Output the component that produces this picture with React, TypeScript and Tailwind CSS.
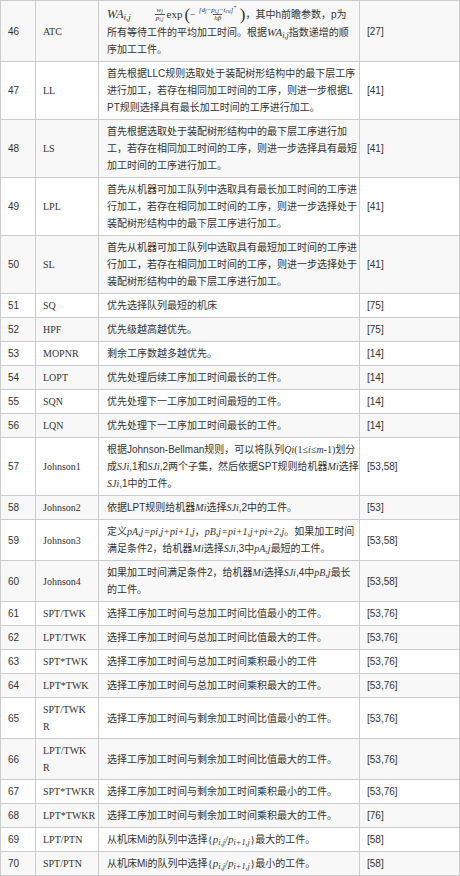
import React from 'react';

type Row = {
  no: number;
  name: React.ReactNode;
  lines: React.ReactNode[];
  refs: string;
  firstTall?: boolean;
};

// italic math, serif like the source page
const M: React.FC<{ children: React.ReactNode }> = ({ children }) => (
  <i className="font-['Liberation_Serif',serif] text-[10px]">{children}</i>
);

const Frac: React.FC<{ top: React.ReactNode; bottom: React.ReactNode }> = ({ top, bottom }) => (
  <span className="mx-[2px] inline-flex flex-col items-center align-middle font-['Liberation_Serif',serif] text-[7px] leading-[7px] italic">
    <span className="px-[1px]">{top}</span>
    <span className="border-t border-[#555] px-[1px]">{bottom}</span>
  </span>
);

const Pij: React.FC<{ sub: string }> = ({ sub }) => (
  <i className="font-['Liberation_Serif',serif] text-[11px]">
    p<sub>{sub}</sub>
  </i>
);

const rows: Row[] = [
  {
    no: 46,
    name: 'ATC',
    firstTall: true,
    lines: [
      <>
        <i className="font-['Liberation_Serif',serif] text-[12px]">
          WA<sub>i,j</sub>
        </i>
        <span className="ml-[22px]" />
        <Frac top={<>w<sub>j</sub></>} bottom={<>p<sub>i,j</sub></>} />
        <span className="font-['Liberation_Serif',serif] text-[11px]">exp</span>
        <span className="ml-[2px] font-['Liberation_Serif',serif] text-[17px] leading-[17px] font-light">(</span>
        <span className="font-['Liberation_Serif',serif] text-[10px]">−</span>
        <Frac
          top={<>[d<sub>j</sub>−p<sub>i,j</sub>−t<sub>cu</sub>]<sup>+</sup></>}
          bottom={<>hp̄</>}
        />
        <span className="font-['Liberation_Serif',serif] text-[17px] leading-[17px] font-light">)</span>
        ，其中h前瞻参数，p为
      </>,
      <>
        所有等待工件的平均加工时间。根据
        <i className="font-['Liberation_Serif',serif] text-[11px]">
          WA<sub>i,j</sub>
        </i>
        指数递增的顺
      </>,
      '序加工工件。',
    ],
    refs: '[27]',
  },
  {
    no: 47,
    name: 'LL',
    lines: [
      '首先根据LLC规则选取处于装配树形结构中的最下层工序',
      '进行加工，若存在相同加工时间的工序，则进一步根据L',
      'PT规则选择具有最长加工时间的工序进行加工。',
    ],
    refs: '[41]',
  },
  {
    no: 48,
    name: 'LS',
    lines: [
      '首先根据选取处于装配树形结构中的最下层工序进行加',
      '工，若存在相同加工时间的工序，则进一步选择具有最短',
      '加工时间的工序进行加工。',
    ],
    refs: '[41]',
  },
  {
    no: 49,
    name: 'LPL',
    lines: [
      '首先从机器可加工队列中选取具有最长加工时间的工序进',
      '行加工，若存在相同加工时间的工序，则进一步选择处于',
      '装配树形结构中的最下层工序进行加工。',
    ],
    refs: '[41]',
  },
  {
    no: 50,
    name: 'SL',
    lines: [
      '首先从机器可加工队列中选取具有最短加工时间的工序进',
      '行加工，若存在相同加工时间的工序，则进一步选择处于',
      '装配树形结构中的最下层工序进行加工。',
    ],
    refs: '[41]',
  },
  { no: 51, name: 'SQ', lines: ['优先选择队列最短的机床'], refs: '[75]' },
  { no: 52, name: 'HPF', lines: ['优先级越高越优先。'], refs: '[75]' },
  { no: 53, name: 'MOPNR', lines: ['剩余工序数越多越优先。'], refs: '[14]' },
  { no: 54, name: 'LOPT', lines: ['优先处理后续工序加工时间最长的工件。'], refs: '[14]' },
  { no: 55, name: 'SQN', lines: ['优先处理下一工序加工时间最短的工件。'], refs: '[14]' },
  { no: 56, name: 'LQN', lines: ['优先处理下一工序加工时间最长的工件。'], refs: '[14]' },
  {
    no: 57,
    name: 'Johnson1',
    lines: [
      <>
        根据Johnson-Bellman规则，可以将队列<M>Qi</M>
        <span className="font-['Liberation_Serif',serif] text-[10px]">
          (1≤<i>i</i>≤<i>m</i>-1)
        </span>
        划分
      </>,
      <>
        成<M>SJi</M>,1和<M>SJi</M>,2两个子集，然后依据SPT规则给机器<M>Mi</M>选择
      </>,
      <>
        <M>SJi</M>,1中的工件。
      </>,
    ],
    refs: '[53,58]',
  },
  {
    no: 58,
    name: 'Johnson2',
    lines: [
      <>
        依据LPT规则给机器<M>Mi</M>选择<M>SJi</M>,2中的工件。
      </>,
    ],
    refs: '[53]',
  },
  {
    no: 59,
    name: 'Johnson3',
    lines: [
      <>
        定义<M>pA,j=pi,j+pi+1,j</M>，<M>pB,j=pi+1,j+pi+2,j</M>。如果加工时间
      </>,
      <>
        满足条件2，给机器<M>Mi</M>选择<M>SJi</M>,3中<M>pA,j</M>最短的工件。
      </>,
    ],
    refs: '[53,58]',
  },
  {
    no: 60,
    name: 'Johnson4',
    lines: [
      <>
        如果加工时间满足条件2，给机器<M>Mi</M>选择<M>SJi</M>,4中<M>pB,j</M>最长
      </>,
      '的工件。',
    ],
    refs: '[53,58]',
  },
  { no: 61, name: 'SPT/TWK', lines: ['选择工序加工时间与总加工时间比值最小的工件。'], refs: '[53,76]' },
  { no: 62, name: 'LPT/TWK', lines: ['选择工序加工时间与总加工时间比值最大的工件。'], refs: '[53,76]' },
  { no: 63, name: 'SPT*TWK', lines: ['选择工序加工时间与总加工时间乘积最小的工件'], refs: '[53,76]' },
  { no: 64, name: 'LPT*TWK', lines: ['选择工序加工时间与总加工时间乘积最大的工件。'], refs: '[53,76]' },
  {
    no: 65,
    name: (
      <>
        <div>SPT/TWK</div>
        <div>R</div>
      </>
    ),
    lines: ['选择工序加工时间与剩余加工时间比值最小的工件。'],
    refs: '[53,76]',
  },
  {
    no: 66,
    name: (
      <>
        <div>LPT/TWK</div>
        <div>R</div>
      </>
    ),
    lines: ['选择工序加工时间与剩余加工时间比值最大的工件。'],
    refs: '[53,76]',
  },
  { no: 67, name: 'SPT*TWKR', lines: ['选择工序加工时间与剩余加工时间乘积最小的工件。'], refs: '[53,76]' },
  { no: 68, name: 'LPT*TWKR', lines: ['选择工序加工时间与剩余加工时间乘积最大的工件。'], refs: '[76]' },
  {
    no: 69,
    name: 'LPT/PTN',
    lines: [
      <>
        从机床Mi的队列中选择
        <span className="font-['Liberation_Serif',serif] text-[11px]">
          {'{'}
          <Pij sub="i,j" />/<Pij sub="i+1,j" />
          {'}'}
        </span>
        最大的工件。
      </>,
    ],
    refs: '[58]',
  },
  {
    no: 70,
    name: 'SPT/PTN',
    lines: [
      <>
        从机床Mi的队列中选择
        <span className="font-['Liberation_Serif',serif] text-[11px]">
          {'{'}
          <Pij sub="i,j" />/<Pij sub="i+1,j" />
          {'}'}
        </span>
        最小的工件。
      </>,
    ],
    refs: '[58]',
  },
];

export default function App() {
  return (
    <div className="min-h-[876px] w-[460px] bg-white">
      <table className="w-[459px] table-fixed border-collapse font-['Liberation_Sans','Noto_Sans_CJK_SC',sans-serif] text-[10px] leading-[17px] text-[#333]">
        <colgroup>
          <col className="w-[35px]" />
          <col className="w-[63px]" />
          <col className="w-[261px]" />
          <col className="w-[100px]" />
        </colgroup>
        <tbody>
          {rows.map((r, i) => (
            <tr key={r.no} className={i % 2 === 0 ? 'bg-[#f8f8f8]' : 'bg-white'}>
              <td className="border border-[#cccccc] px-[7px] py-[3px] align-middle">{r.no}</td>
              <td className="border border-[#cccccc] px-[7px] py-[3px] align-middle whitespace-nowrap font-['Liberation_Serif','Noto_Sans_CJK_SC',serif] text-[10px]">
                {r.name}
              </td>
              <td className="border border-[#cccccc] px-[8px] py-[3px] align-middle">
                {r.lines.map((l, j) => (
                  <div
                    key={j}
                    className={
                      r.firstTall && j === 0
                        ? 'flex h-[20px] items-center whitespace-nowrap'
                        : 'whitespace-nowrap'
                    }
                  >
                    {l}
                  </div>
                ))}
              </td>
              <td className="border border-[#cccccc] px-[7px] py-[3px] align-middle">{r.refs}</td>
            </tr>
          ))}
        </tbody>
      </table>
    </div>
  );
}
